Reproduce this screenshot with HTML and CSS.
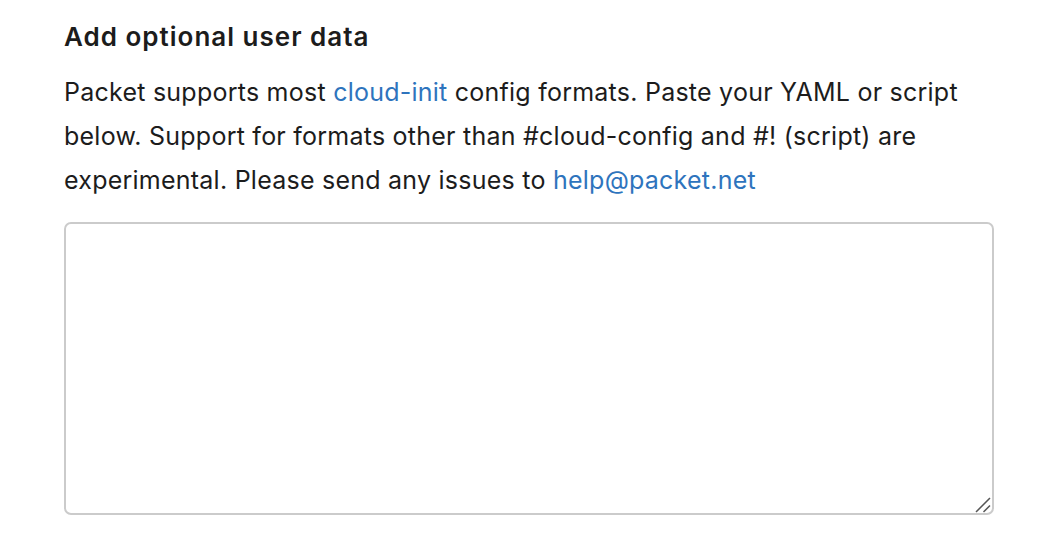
FILE: index.html
```html
<!DOCTYPE html>
<html>
<head>
<meta charset="utf-8">
<link rel="stylesheet" href="styles.css">
</head>
<body>
<section class="userdata">
  <h3 class="title">Add optional user data</h3>
  <p class="desc">Packet supports most <a href="#" class="link">cloud-init</a> config formats. Paste your YAML or script<br>below. Support for formats other than #cloud-config and #! (script) are<br>experimental. Please send any issues to <a href="#" class="link">help@packet.net</a></p>
  <div class="field">
    <textarea class="input"></textarea>
    <svg class="grip" width="16" height="16" viewBox="0 0 16 16">
      <line x1="1" y1="15" x2="15" y2="1" stroke="#555" stroke-width="1.5"/>
      <line x1="8.5" y1="15" x2="15" y2="8.5" stroke="#555" stroke-width="1.5"/>
    </svg>
  </div>
</section>
</body>
</html>
```
FILE: styles.css
```css
html, body {
  margin: 0;
  padding: 0;
  background: #ffffff;
}
body {
  font-family: Inter, "Liberation Sans", sans-serif;
  color: #1c1c1c;
}
.userdata {
  width: 930px;
  padding: 21px 0 0 64px;
  display: flex;
  flex-direction: column;
}
.title {
  margin: 0;
  font-size: 26px;
  line-height: 32px;
  font-weight: 600;
  letter-spacing: 1px;
}
.desc {
  margin: 17px 0 0;
  font-size: 25px;
  line-height: 44px;
  font-weight: 400;
  letter-spacing: 0.24px;
  white-space: nowrap;
}
.link {
  color: #2e74bd;
  text-decoration: none;
}
.field {
  position: relative;
  margin-top: 20px;
  width: 930px;
  height: 293px;
}
.input {
  display: block;
  box-sizing: border-box;
  width: 100%;
  height: 100%;
  margin: 0;
  border: 2px solid #cbcbcb;
  border-radius: 7px;
  resize: none;
  font: inherit;
  outline: none;
}
.grip {
  position: absolute;
  right: 3px;
  bottom: 2px;
}
```
